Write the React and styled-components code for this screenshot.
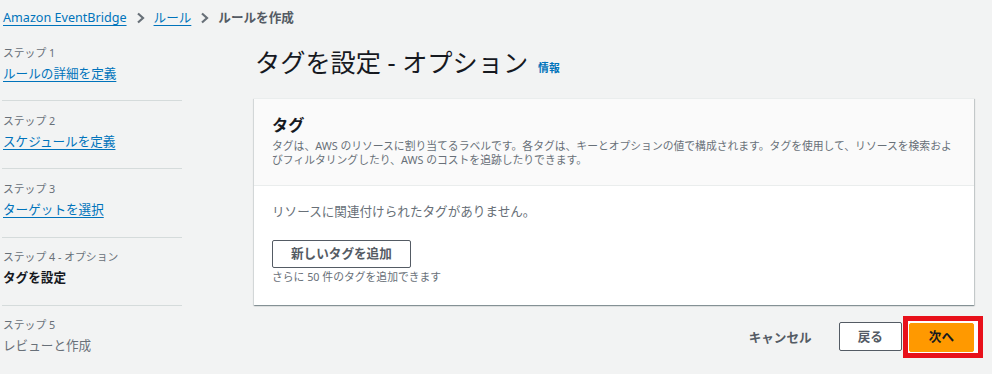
import React from "react";
import styled, { createGlobalStyle } from "styled-components";

const Global = createGlobalStyle`
  html, body { margin: 0; padding: 0; background: #f2f3f3; }
  body {
    font-family: "Noto Sans", "Noto Sans CJK JP", sans-serif;
    color: #16191f;
    -webkit-font-smoothing: antialiased;
  }
  * { box-sizing: border-box; }
`;

const Page = styled.div`
  width: 992px;
  min-height: 374px;
  background: #f2f3f3;
`;

const Breadcrumbs = styled.nav`
  display: flex;
  align-items: center;
  height: 36px;
  padding: 0 3px;
  font-size: 12.6px;
  line-height: 18px;
`;

const CrumbLink = styled.a`
  color: #0073bb;
  text-decoration: underline;
  text-underline-offset: 3px;
  text-decoration-thickness: 1px;
`;

const CrumbCurrent = styled.span`
  color: #545b64;
  font-weight: 700;
`;

const Sep = styled.span`
  display: inline-flex;
  align-items: center;
  justify-content: center;
  width: 27px;
  height: 18px;
  color: #687078;
`;

const Layout = styled.div`
  display: grid;
  grid-template-columns: 180px 720px;
  column-gap: 72px;
  padding-left: 2px;
`;

const StepList = styled.ol`
  list-style: none;
  margin: 9px 0 0;
  padding: 0;
`;

const Step = styled.li`
  display: flex;
  flex-direction: column;
  gap: 3px;
  padding: ${(p) => (p.$first ? "0" : "11.7px")} 0 16.4px 1px;
  border-top: ${(p) => (p.$first ? "none" : "1px solid #d5dbdb")};
`;

const StepLabel = styled.span`
  font-size: 10.8px;
  line-height: 16px;
  color: #687078;
`;

const StepName = styled.a`
  font-size: 12.6px;
  line-height: 20px;
  color: ${(p) => (p.$state === "current" ? "#16191f" : p.$state === "future" ? "#687078" : "#0073bb")};
  font-weight: ${(p) => (p.$state === "current" ? 700 : 400)};
  text-decoration: ${(p) => (p.$state === "link" ? "underline" : "none")};
  text-underline-offset: 3px;
  align-self: flex-start;
`;

const Main = styled.main`
  display: flex;
  flex-direction: column;
  padding-top: 9px;
`;

const TitleRow = styled.div`
  display: flex;
  align-items: baseline;
  gap: 10px;
  height: 34px;
  margin-left: 1px;
`;

const Title = styled.h1`
  margin: 0;
  font-size: 25.2px;
  line-height: 34px;
  font-weight: 400;
  color: #16191f;
`;

const Info = styled.a`
  font-size: 10.8px;
  font-weight: 700;
  color: #0073bb;
`;

const Card = styled.section`
  margin-top: 19px;
  background: #ffffff;
  border-top: 1px solid #eaeded;
  box-shadow: 0 1px 1px 0 rgba(0, 28, 36, 0.3), 1px 1px 1px 0 rgba(0, 28, 36, 0.15),
    -1px 1px 1px 0 rgba(0, 28, 36, 0.08);
`;

const CardHeader = styled.header`
  background: #fafafa;
  border-bottom: 1px solid #eaeded;
  padding: 15px 18px 17px;
  display: flex;
  flex-direction: column;
  gap: 3px;
`;

const CardTitle = styled.h2`
  margin: 0;
  font-size: 16.2px;
  line-height: 22px;
  font-weight: 700;
  color: #16191f;
`;

const Desc = styled.p`
  margin: 0;
  font-size: 10.8px;
  line-height: 14.4px;
  color: #687078;
`;

const CardBody = styled.div`
  padding: 17px 18px 21px;
  display: flex;
  flex-direction: column;
  align-items: flex-start;
`;

const Empty = styled.p`
  margin: 0;
  font-size: 12.6px;
  line-height: 18px;
  color: #687078;
`;

const Button = styled.button`
  font-family: inherit;
  font-size: 12.6px;
  font-weight: 700;
  line-height: 18px;
  height: ${(p) => p.$h || 28}px;
  padding: 0 ${(p) => p.$px || 18}px;
  border-radius: 2px;
  border: 1px solid ${(p) => (p.$primary ? "#ff9900" : "#545b64")};
  background: ${(p) => (p.$primary ? "#ff9900" : "#ffffff")};
  color: ${(p) => (p.$primary ? "#16191f" : "#545b64")};
  cursor: pointer;
`;

const AddButton = styled(Button)`
  margin-top: 19px;
`;

const Hint = styled.p`
  margin: 2px 0 0;
  font-size: 10.8px;
  line-height: 14px;
  color: #687078;
`;

const Footer = styled.div`
  display: flex;
  justify-content: flex-end;
  align-items: center;
  margin-top: 11px;
`;

const LinkButton = styled.button`
  font-family: inherit;
  font-size: 12.6px;
  font-weight: 700;
  color: #545b64;
  background: none;
  border: none;
  padding: 0 18px;
  height: 29px;
  margin-right: 9px;
`;

const Highlight = styled.div`
  display: flex;
  border: 5px solid #e8101a;
  background: #ffffff;
  padding: 2px 4px 1px 1px;
  margin-left: 1px;
  margin-right: -9px;
`;

const Chevron = () => (
  <svg width="9" height="12" viewBox="0 0 9 12" aria-hidden="true">
    <path d="M2 1.5 L7 6 L2 10.5" fill="none" stroke="currentColor" strokeWidth="2.2" />
  </svg>
);

const steps = [
  { label: "ステップ 1", name: "ルールの詳細を定義", state: "link" },
  { label: "ステップ 2", name: "スケジュールを定義", state: "link" },
  { label: "ステップ 3", name: "ターゲットを選択", state: "link" },
  { label: "ステップ 4 - オプション", name: "タグを設定", state: "current" },
  { label: "ステップ 5", name: "レビューと作成", state: "future" },
];

export default function App() {
  return (
    <Page>
      <Global />
      <Breadcrumbs>
        <CrumbLink>Amazon EventBridge</CrumbLink>
        <Sep><Chevron /></Sep>
        <CrumbLink>ルール</CrumbLink>
        <Sep><Chevron /></Sep>
        <CrumbCurrent>ルールを作成</CrumbCurrent>
      </Breadcrumbs>
      <Layout>
        <StepList>
          {steps.map((s, i) => (
            <Step key={s.label} $first={i === 0}>
              <StepLabel>{s.label}</StepLabel>
              <StepName $state={s.state}>{s.name}</StepName>
            </Step>
          ))}
        </StepList>
        <Main>
          <TitleRow>
            <Title>タグを設定 - オプション</Title>
            <Info>情報</Info>
          </TitleRow>
          <Card>
            <CardHeader>
              <CardTitle>タグ</CardTitle>
              <Desc>
                タグは、AWS のリソースに割り当てるラベルです。各タグは、キーとオプションの値で構成されます。タグを使用して、リソースを検索およびフィルタリングしたり、AWS のコストを追跡したりできます。
              </Desc>
            </CardHeader>
            <CardBody>
              <Empty>リソースに関連付けられたタグがありません。</Empty>
              <AddButton>新しいタグを追加</AddButton>
              <Hint>さらに 50 件のタグを追加できます</Hint>
            </CardBody>
          </Card>
          <Footer>
            <LinkButton>キャンセル</LinkButton>
            <Button $h={29}>戻る</Button>
            <Highlight>
              <Button $primary $h={29} $px={19}>次へ</Button>
            </Highlight>
          </Footer>
        </Main>
      </Layout>
    </Page>
  );
}
